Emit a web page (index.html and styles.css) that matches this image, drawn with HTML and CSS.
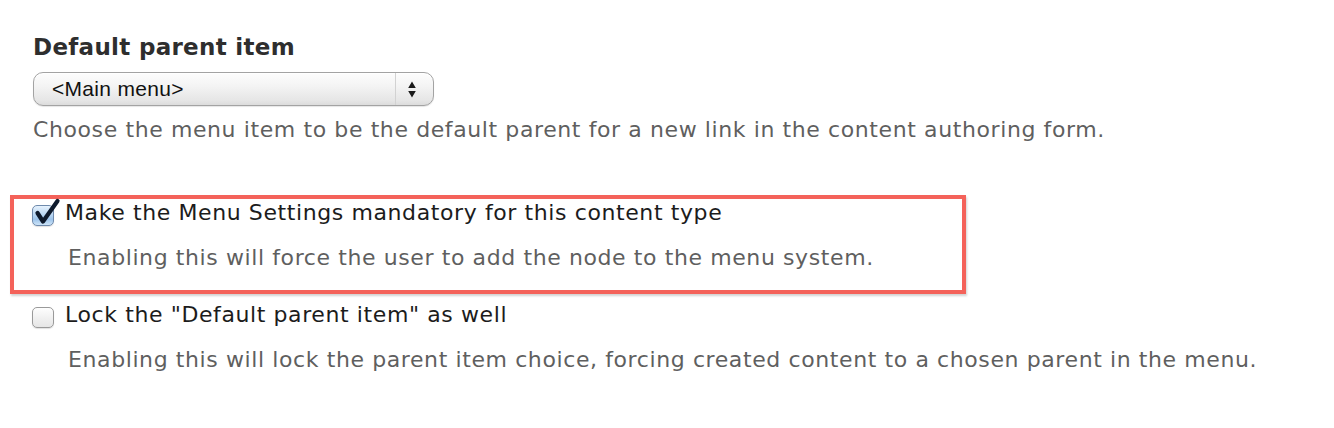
FILE: index.html
```html
<!DOCTYPE html>
<html>
<head>
<meta charset="utf-8">
<link rel="stylesheet" href="styles.css">
</head>
<body>
<div class="page">
  <div class="field">
    <div class="field-label">Default parent item</div>
    <div class="select">
      <span class="select-value">&lt;Main menu&gt;</span>
      <span class="select-arrows">
        <svg width="8" height="17" viewBox="0 0 8 17"><path d="M4 0.5 L7.8 7 H0.2 Z M4 16.5 L7.8 10 H0.2 Z" fill="#1a1a1a"/></svg>
      </span>
    </div>
    <div class="desc">Choose the menu item to be the default parent for a new link in the content authoring form.</div>
  </div>

  <div class="highlight">
    <div class="check-row">
      <span class="checkbox checked">
        <svg width="32" height="32" viewBox="0 0 32 32"><path d="M5.5 16 L11 24.5 L25.5 4" fill="none" stroke="#0e1a2c" stroke-width="4.2" stroke-linecap="round" stroke-linejoin="round"/></svg>
      </span>
      <span class="check-label">Make the Menu Settings mandatory for this content type</span>
    </div>
    <div class="desc indent">Enabling this will force the user to add the node to the menu system.</div>
  </div>

  <div class="option">
    <div class="check-row">
      <span class="checkbox"></span>
      <span class="check-label">Lock the "Default parent item" as well</span>
    </div>
    <div class="desc indent">Enabling this will lock the parent item choice, forcing created content to a chosen parent in the menu.</div>
  </div>
</div>
</body>
</html>
```

FILE: styles.css
```css
html, body {
  margin: 0;
  padding: 0;
  background: #ffffff;
}
.page {
  width: 1334px;
  height: 428px;
  font-family: "DejaVu Sans", Verdana, sans-serif;
  font-size: 22px;
  letter-spacing: 0.6px;
  color: #222222;
  padding-top: 34px;
  box-sizing: border-box;
}
.field {
  padding-left: 33px;
}
.field-label {
  font-weight: bold;
  font-size: 23px;
  letter-spacing: 0.3px;
  line-height: 26px;
  color: #2e2e2e;
  margin-bottom: 12px;
}
.select {
  width: 401px;
  height: 34px;
  box-sizing: border-box;
  border: 1px solid #a3a3a3;
  border-radius: 10px;
  background: linear-gradient(#fdfdfd, #f4f4f4 40%, #e6e6e6 85%, #dcdcdc);
  box-shadow: inset 0 1px 0 #ffffff, 0 1px 1px rgba(0,0,0,0.10);
  display: flex;
  align-items: stretch;
  font-family: "Liberation Sans", Arial, sans-serif;
  font-size: 21px;
  letter-spacing: 0.3px;
  color: #111111;
}
.select-value {
  flex: 1;
  display: flex;
  align-items: center;
  padding-left: 18px;
  border-right: 1px solid #d2d2d2;
}
.select-arrows {
  width: 32px;
  display: flex;
  align-items: center;
  justify-content: center;
  padding-right: 5px;
  padding-top: 1px;
}
.desc {
  color: #5f5f5f;
  line-height: 26px;
  margin-top: 11px;
}
.highlight {
  margin: 52px 0 0 10px;
  width: 956px;
  height: 99px;
  box-sizing: border-box;
  border: 4px solid #f4625a;
  box-shadow: 1px 2px 2px rgba(0,0,0,0.18);
  padding: 1px 0 0 18px;
}
.check-row {
  display: flex;
  align-items: flex-start;
  gap: 11px;
}
.checkbox {
  position: relative;
  width: 22px;
  height: 21px;
  margin-top: 5px;
  box-sizing: border-box;
  border: 1px solid #9a9a9a;
  border-radius: 5px;
  background: linear-gradient(#fefefe, #f1f1f1 50%, #e6e6e6);
  box-shadow: 0 1px 1px rgba(0,0,0,0.12);
  flex: none;
}
.checkbox.checked {
  border-color: #6f8aac;
  background: linear-gradient(#e6f2fd, #b4d3f1 50%, #9cc3ea 70%, #cde4f8);
}
.checkbox svg {
  position: absolute;
  left: -1px;
  top: -9px;
}
.check-label {
  color: #1c1c1c;
  line-height: 26px;
}
.desc.indent {
  margin-top: 19px;
  padding-left: 36px;
}
.option {
  padding: 8px 0 0 32px;
}
.option .desc.indent {
  margin-top: 19px;
}
```
